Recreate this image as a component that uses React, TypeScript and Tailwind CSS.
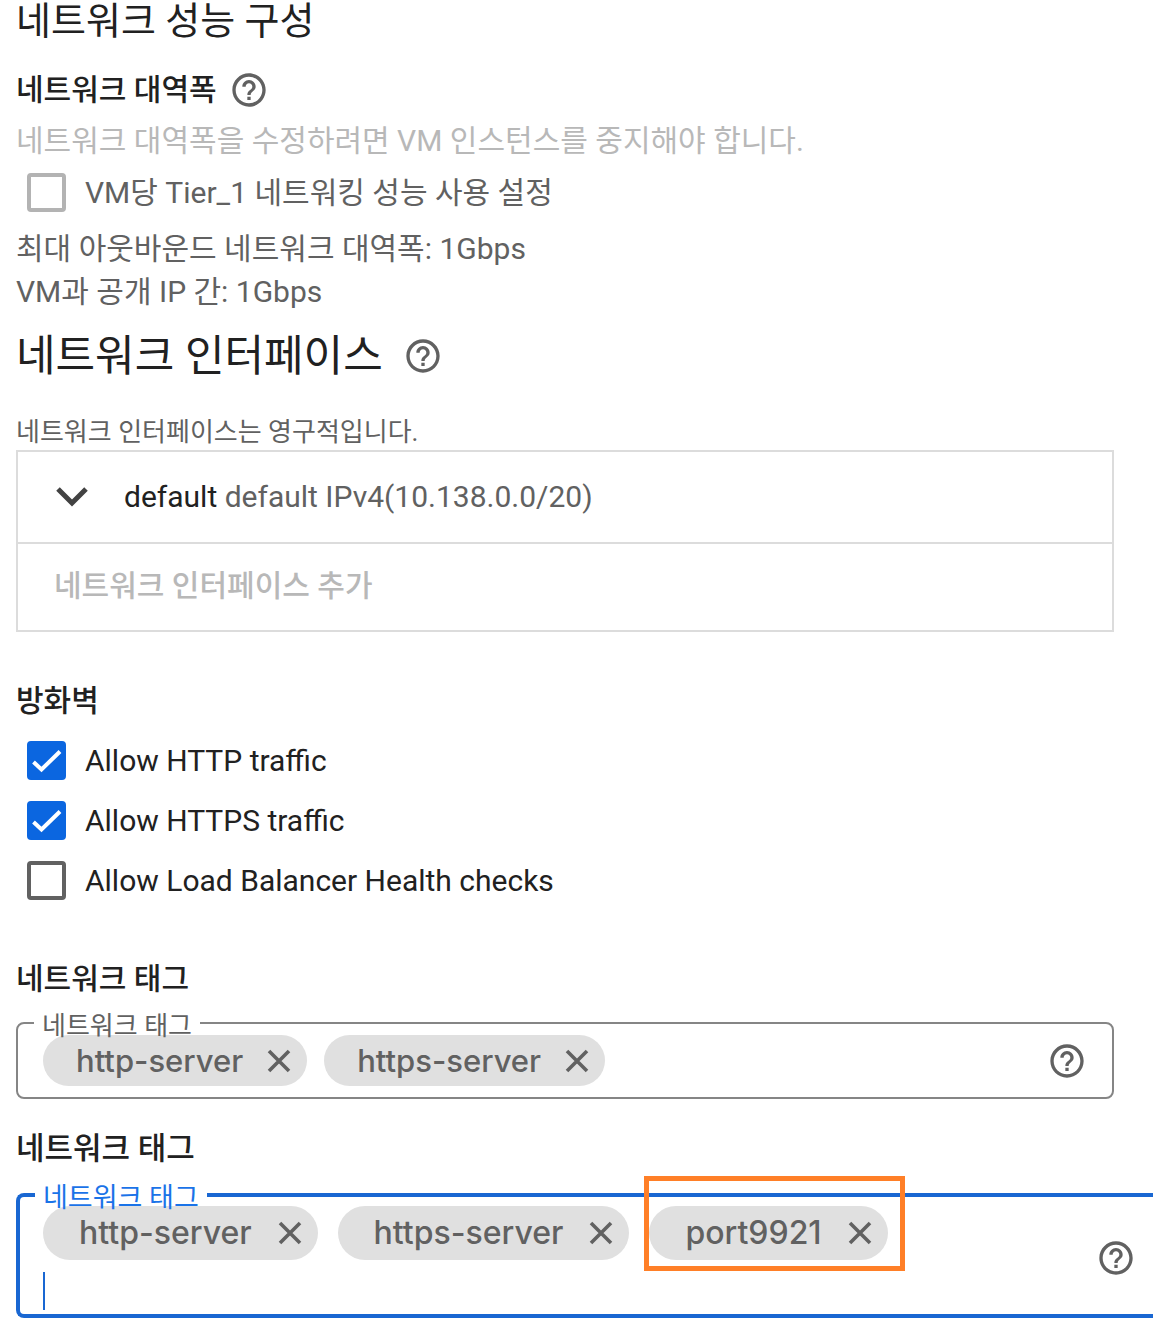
import { useState } from "react";
import type { ReactNode } from "react";

function HelpButton() {
  return (
    <button type="button" aria-label="도움말" className="flex shrink-0">
      <svg viewBox="0 0 24 24" className="size-10 shrink-0 fill-[#616161]" aria-hidden="true">
        <path d="M11 18h2v-2h-2v2zm1-16C6.48 2 2 6.48 2 12s4.48 10 10 10 10-4.48 10-10S17.52 2 12 2zm0 18c-4.41 0-8-3.59-8-8s3.59-8 8-8 8 3.59 8 8-3.59 8-8 8zm0-14c-2.21 0-4 1.79-4 4h2c0-1.1.9-2 2-2s2 .9 2 2c0 2-3 1.75-3 5h2c0-2.25 3-2.5 3-5 0-2.21-1.79-4-4-4z" />
      </svg>
    </button>
  );
}

function CheckRow({
  id,
  label,
  initial = false,
  disabled = false,
}: {
  id: string;
  label: string;
  initial?: boolean;
  disabled?: boolean;
}) {
  const [checked, setChecked] = useState(initial);
  return (
    <div className="flex items-start gap-[19px] pl-[11px]">
      <span className="relative flex size-[39px] shrink-0">
        <input
          id={id}
          type="checkbox"
          checked={checked}
          disabled={disabled}
          onChange={(e) => setChecked(e.target.checked)}
          className="size-full appearance-none rounded-[4px] border-4 border-[#616161] bg-white checked:border-[#0b66e0] checked:bg-[#0b66e0] disabled:border-[#b3b3b3]"
        />
        {checked && (
          <svg viewBox="0 0 39 39" className="pointer-events-none absolute inset-0" aria-hidden="true">
            <path d="M6.5 21L14.5 28.5L33 10.5" fill="none" stroke="#fff" strokeWidth="4" />
          </svg>
        )}
      </span>
      <label htmlFor={id} className={disabled ? "text-[#616161]" : "text-[#212121]"}>
        {label}
      </label>
    </div>
  );
}

function Chip({ label, large = false, marked = false }: { label: string; large?: boolean; marked?: boolean }) {
  return (
    <span
      className={
        large
          ? "relative flex h-[54px] items-center gap-[26px] rounded-full bg-[#e0e0e0] pr-4 pl-9 text-[32px]"
          : "relative flex h-[51px] items-center gap-6 rounded-full bg-[#e0e0e0] pr-4 pl-[33px] text-[31px]"
      }
    >
      <span className="font-[Inter] leading-none font-medium text-[#616161]">{label}</span>
      <button type="button" aria-label={`${label} 삭제`} className="flex">
        <svg viewBox="0 0 24 24" className="size-6" aria-hidden="true">
          <path d="M2 2L22 22M22 2L2 22" fill="none" stroke="#616161" strokeWidth="3.6" />
        </svg>
      </button>
      {marked && (
        <span className="pointer-events-none absolute -top-[30px] -right-[17px] -bottom-[11px] -left-[5px] border-5 border-[#ff7f27]" />
      )}
    </span>
  );
}

function Subheading({ children }: { children: ReactNode }) {
  return <h3 className="text-[30px] leading-10 font-medium text-[#212121]">{children}</h3>;
}

export default function App() {
  return (
    <main className="min-h-screen overflow-x-hidden bg-white pb-4 pl-4 font-[Roboto,'Noto_Sans_CJK_KR',sans-serif] text-[30px] leading-10 text-[#616161]">
      <section>
        <h2 className="text-[38px] leading-[42px] text-[#212121]">네트워크 성능 구성</h2>
        <div className="mt-7 flex items-center gap-3">
          <Subheading>네트워크 대역폭</Subheading>
          <HelpButton />
        </div>
        <p className="mt-[11px] text-[#b8b8b8]">네트워크 대역폭을 수정하려면 VM 인스턴스를 중지해야 합니다.</p>
        <div className="mt-3">
          <CheckRow id="tier1" label="VM당 Tier_1 네트워킹 성능 사용 설정" disabled />
        </div>
        <div className="mt-[14px] leading-[43px]">
          <p>최대 아웃바운드 네트워크 대역폭: 1Gbps</p>
          <p>VM과 공개 IP 간: 1Gbps</p>
        </div>
      </section>

      <section className="mt-[18px] mr-[39px]">
        <div className="flex items-center gap-5">
          <h2 className="text-[43px] leading-[50px] text-[#212121]">네트워크 인터페이스</h2>
          <HelpButton />
        </div>
        <p className="mt-[34px] text-[26px] leading-[34px]">네트워크 인터페이스는 영구적입니다.</p>
        <div className="mt-px divide-y-2 divide-[#dcdcdc] border-2 border-[#dcdcdc]">
          <button type="button" className="flex h-[92px] w-full items-center gap-9 pl-[38px] text-left">
            <svg viewBox="0 0 32 20" className="h-5 w-8 shrink-0" aria-hidden="true">
              <path d="M2 2L16 16L30 2" fill="none" stroke="#424242" strokeWidth="5" />
            </svg>
            <span>
              <span className="text-[#212121]">default</span> default IPv4(10.138.0.0/20)
            </span>
          </button>
          <button
            type="button"
            disabled
            className="flex h-[86px] w-full items-center pb-[2px] pl-9 text-left font-medium text-[#b8b8b8]"
          >
            네트워크 인터페이스 추가
          </button>
        </div>
      </section>

      <section className="mt-[49px]">
        <Subheading>방화벽</Subheading>
        <div className="mt-5 flex flex-col gap-5">
          <CheckRow id="http" label="Allow HTTP traffic" initial />
          <CheckRow id="https" label="Allow HTTPS traffic" initial />
          <CheckRow id="lb" label="Allow Load Balancer Health checks" />
        </div>
      </section>

      <section className="mt-[58px] mr-[39px]">
        <Subheading>네트워크 태그</Subheading>
        <fieldset className="mt-3 rounded-lg border-2 border-[#858585] pr-[25px] pb-[11px] pl-[25px]">
          <legend className="relative z-10 -ml-[9px] px-2 pt-[6px] text-[26px] leading-[18px]">네트워크 태그</legend>
          <div className="flex items-center justify-between">
            <div className="flex gap-[17px]">
              <Chip label="http-server" />
              <Chip label="https-server" />
            </div>
            <HelpButton />
          </div>
        </fieldset>
      </section>

      <section className="mt-[30px]">
        <h3 className="text-[31px] leading-10 font-medium text-[#212121]">네트워크 태그</h3>
        <fieldset className="mt-[15px] rounded-l-lg border-4 border-r-0 border-[#1967d2] pr-[17px] pb-1 pl-[23px]">
          <legend className="relative z-10 -ml-2 px-2 pt-[6px] text-[27px] leading-4 text-[#1a73e8]">네트워크 태그</legend>
          <div className="flex items-center justify-between">
            <div className="flex-1">
              <div className="flex gap-5">
                <Chip label="http-server" large />
                <Chip label="https-server" large />
                <Chip label="port9921" large marked />
              </div>
              <div className="mt-3 flex h-[38px] items-center">
                <span className="h-full w-[2px] bg-[#1967d2]" />
                <input type="text" aria-label="네트워크 태그" className="min-w-0 flex-1 bg-transparent outline-none" />
              </div>
            </div>
            <HelpButton />
          </div>
        </fieldset>
      </section>
    </main>
  );
}
